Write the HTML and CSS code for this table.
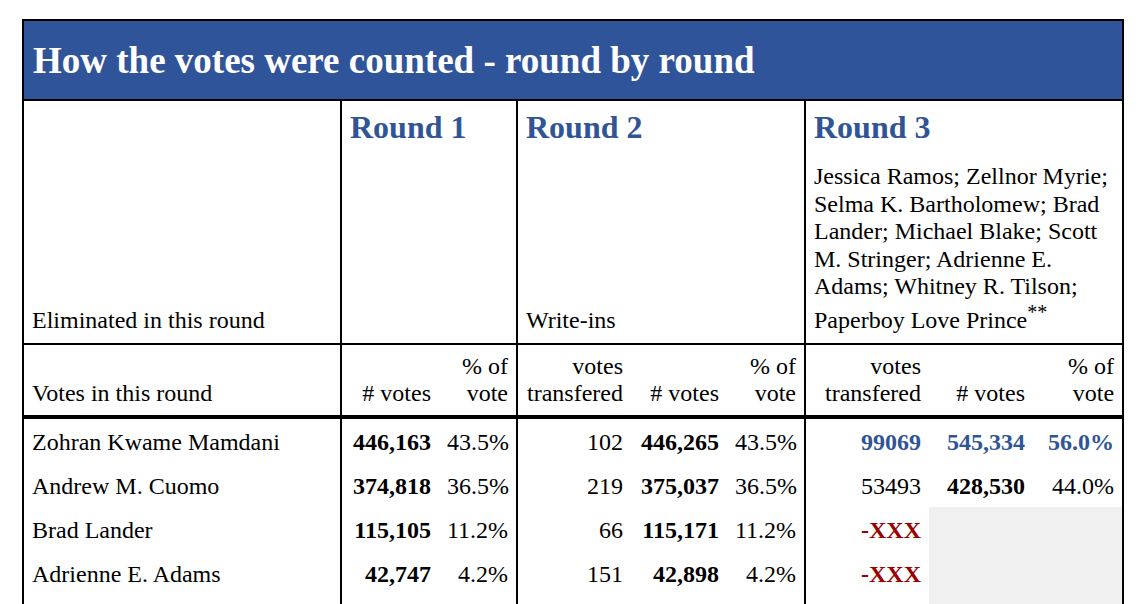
FILE: index.html
```html
<!DOCTYPE html>
<html lang="en">
<head>
<meta charset="utf-8">
<title>How the votes were counted - round by round</title>
<link rel="stylesheet" href="styles.css">
</head>
<body>
<div class="wrap">
<table class="rcv">
  <colgroup>
    <col class="c-name">
    <col class="c-r1v"><col class="c-r1p">
    <col class="c-r2t"><col class="c-r2v"><col class="c-r2p">
    <col class="c-r3t"><col class="c-r3v"><col class="c-r3p">
  </colgroup>
  <thead>
    <tr>
      <th colspan="9" class="title">How the votes were counted - round by round</th>
    </tr>
    <tr class="rounds">
      <td></td>
      <th colspan="2" class="g">Round 1</th>
      <th colspan="3" class="g">Round 2</th>
      <th colspan="3" class="g">Round 3</th>
    </tr>
    <tr class="elim">
      <td>Eliminated in this round</td>
      <td colspan="2" class="g"></td>
      <td colspan="3" class="g">Write-ins</td>
      <td colspan="3" class="g">Jessica Ramos; Zellnor Myrie; Selma K. Bartholomew; Brad Lander; Michael Blake; Scott M. Stringer; Adrienne E. Adams; Whitney R. Tilson; Paperboy Love Prince<sup>**</sup></td>
    </tr>
    <tr class="cols">
      <td>Votes in this round</td>
      <td class="num g"># votes</td>
      <td class="num">% of<br>vote</td>
      <td class="num g">votes<br>transfered</td>
      <td class="num"># votes</td>
      <td class="num">% of<br>vote</td>
      <td class="num g">votes<br>transfered</td>
      <td class="num"># votes</td>
      <td class="num">% of<br>vote</td>
    </tr>
  </thead>
  <tbody>
    <tr>
      <td>Zohran Kwame Mamdani</td>
      <td class="num g strong">446,163</td>
      <td class="num">43.5%</td>
      <td class="num g">102</td>
      <td class="num strong">446,265</td>
      <td class="num">43.5%</td>
      <td class="num g lead">99069</td>
      <td class="num lead">545,334</td>
      <td class="num lead">56.0%</td>
    </tr>
    <tr>
      <td>Andrew M. Cuomo</td>
      <td class="num g strong">374,818</td>
      <td class="num">36.5%</td>
      <td class="num g">219</td>
      <td class="num strong">375,037</td>
      <td class="num">36.5%</td>
      <td class="num g">53493</td>
      <td class="num strong">428,530</td>
      <td class="num">44.0%</td>
    </tr>
    <tr>
      <td>Brad Lander</td>
      <td class="num g strong">115,105</td>
      <td class="num">11.2%</td>
      <td class="num g">66</td>
      <td class="num strong">115,171</td>
      <td class="num">11.2%</td>
      <td class="num g out-x">-XXX</td>
      <td class="out"></td>
      <td class="out"></td>
    </tr>
    <tr>
      <td>Adrienne E. Adams</td>
      <td class="num g strong">42,747</td>
      <td class="num">4.2%</td>
      <td class="num g">151</td>
      <td class="num strong">42,898</td>
      <td class="num">4.2%</td>
      <td class="num g out-x">-XXX</td>
      <td class="out"></td>
      <td class="out"></td>
    </tr>
    <tr class="filler">
      <td></td>
      <td class="g"></td>
      <td></td>
      <td class="g"></td>
      <td></td>
      <td></td>
      <td class="g"></td>
      <td class="out"></td>
      <td class="out"></td>
    </tr>
  </tbody>
</table>
</div>
</body>
</html>
```

FILE: styles.css
```css
body {
  margin: 0;
  background: #fff;
  color: #000;
  font-family: "Liberation Serif", "Times New Roman", serif;
}

.wrap {
  padding: 19px 20px 0 22px;
}

.rcv {
  border-collapse: collapse;
  table-layout: fixed;
  width: 1102px;
  border: 2px solid #000;
  font-size: 24px;
  line-height: 1.15;
}

.c-name { width: 318px; }
.c-r1v { width: 98px; }
.c-r1p { width: 78px; }
.c-r2t { width: 114px; }
.c-r2v { width: 96px; }
.c-r2p { width: 78px; }
.c-r3t { width: 124px; }
.c-r3v { width: 104px; }
.c-r3p { width: 90px; }

.rcv td,
.rcv th {
  padding: 7px 8px 9px;
  text-align: left;
  font-weight: normal;
  vertical-align: bottom;
}

.rcv .title {
  background: #30549a;
  color: #fff;
  font-size: 37px;
  font-weight: bold;
  line-height: 44px;
  padding: 18px 9px 16px;
  border-bottom: 2px solid #000;
  vertical-align: middle;
}

.rcv .rounds th,
.rcv .rounds td {
  color: #2f5597;
  font-size: 32px;
  font-weight: bold;
  line-height: 37px;
  padding: 8px 8px 0;
  vertical-align: top;
}

.rcv .elim td {
  padding: 17px 8px 8px;
  border-bottom: 2px solid #000;
}

.rcv .cols td {
  padding: 8px 8px 7px;
  border-bottom: 4px solid #000;
}

.rcv tbody td {
  line-height: 28px;
  padding: 9px 8px 7px;
}

.rcv .num {
  text-align: right;
  white-space: nowrap;
}

.rcv .g {
  border-left: 2px solid #000;
}

.rcv .strong {
  font-weight: bold;
}

.rcv .lead {
  color: #2f5597;
  font-weight: bold;
}

.rcv .out-x {
  color: #990000;
  font-weight: bold;
}

.rcv .out {
  background: #f0f0f0;
}
```
